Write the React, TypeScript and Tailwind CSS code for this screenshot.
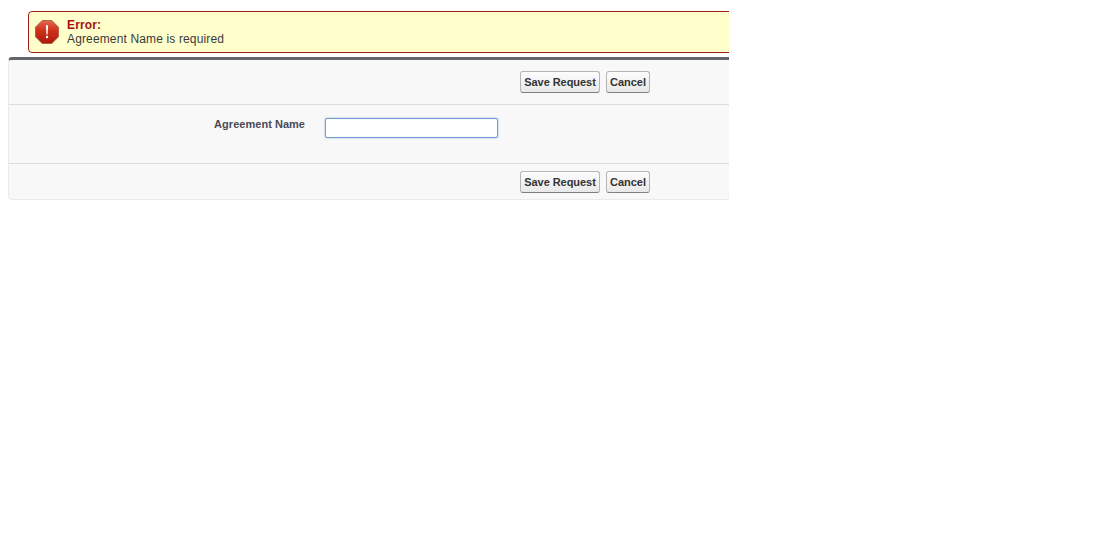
import React from 'react';

function ErrorIcon() {
  return (
    <svg width="24" height="24" viewBox="0 0 25 25" className="shrink-0">
      <defs>
        <linearGradient id="err-grad" x1="0" y1="0" x2="0" y2="1">
          <stop offset="0" stopColor="#e0674f" />
          <stop offset="0.45" stopColor="#cf2f1a" />
          <stop offset="1" stopColor="#a81c0c" />
        </linearGradient>
      </defs>
      <polygon points="7.5,0.5 17.5,0.5 24.5,7.5 24.5,17.5 17.5,24.5 7.5,24.5 0.5,17.5 0.5,7.5" fill="url(#err-grad)" stroke="#b5594c" strokeWidth="1" />
      <path d="M11.4 5.5h2.2l-.5 9.5h-1.2z" fill="#fff" />
      <rect x="11.4" y="16.5" width="2.2" height="2.4" fill="#fff" />
    </svg>
  );
}

function Buttons() {
  const btn =
    'h-[22px] rounded-[3px] border border-[#b5b5b5] border-b-[#7f7f7f] bg-gradient-to-b from-[#fdfdfd] to-[#e8e8e8] text-[11px] font-bold text-[#333] leading-none';
  return (
    <div className="flex gap-[6px] pl-[511px]">
      <button className={`${btn} w-[80px] tracking-[-0.05px]`}>Save Request</button>
      <button className={`${btn} w-[44px] tracking-[-0.05px]`}>Cancel</button>
    </div>
  );
}

export default function App() {
  return (
    <div className="w-[729px] overflow-hidden bg-white pt-[11px] font-['Liberation_Sans',Arial,sans-serif] text-[12px] text-[#222]">
      <div className="ml-[28px] -mr-[10px] flex h-[42px] items-center gap-[8px] rounded-[4px] border border-[#a61c1c] bg-[#ffffcc] pl-[6px]">
        <ErrorIcon />
        <div className="leading-[14px] tracking-[0.14px]">
          <div className="font-bold text-[#a80f0f]">Error:</div>
          <div className="text-[#3a3a3a]">Agreement Name is required</div>
        </div>
      </div>

      <div className="ml-[8px] -mr-[10px] mt-[4px] h-[143px] rounded-[4px] border border-t-[3px] border-[#eaeaea] border-t-[#63666e] bg-[#f8f8f8]">
        <div className="flex h-[45px] items-center border-b border-[#dbdbdb]">
          <Buttons />
        </div>
        <div className="flex h-[59px] border-b border-[#dbdbdb]">
          <label className="w-[296px] pt-[13px] text-right text-[11px] font-bold leading-[13px] tracking-[0.03px] text-[#4a4a56]">
            Agreement Name
          </label>
          <div className="pl-[20px] pt-[13px]">
            <input
              type="text"
              className="block h-[20px] w-[173px] rounded-[2px] border border-[#6f9bcf] bg-white shadow-[0_0_2px_#8fb4de] outline-none"
            />
          </div>
        </div>
        <div className="flex pt-[7px]">
          <Buttons />
        </div>
      </div>
    </div>
  );
}
